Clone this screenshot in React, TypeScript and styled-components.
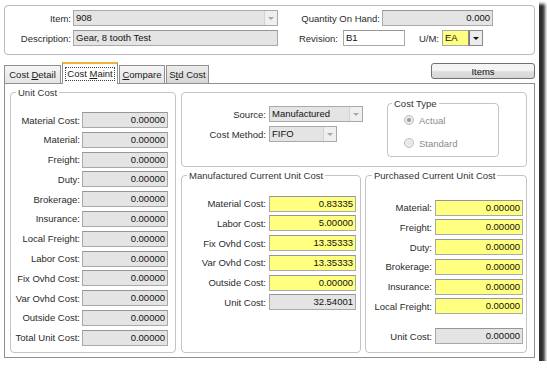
import styled, { createGlobalStyle } from 'styled-components';

const GlobalStyle = createGlobalStyle`
  html, body {
    margin: 0;
    padding: 0;
    background: #fff;
  }
  body {
    font-family: 'Liberation Sans', Arial, sans-serif;
    font-size: 9.5px;
    color: #262626;
  }
`;

const Window = styled.div`
  width: 539px;
  height: 361px;
  box-sizing: border-box;
  background: #fff;
  padding: 5px 4px 3px 4px;
  display: flex;
  flex-direction: column;
  box-shadow: 5px 5px 3px 1px rgba(0, 0, 0, 0.82);
`;

const HeaderBox = styled.div`
  height: 50px;
  box-sizing: border-box;
  border: 1px solid #b9b9b9;
  border-radius: 4px;
  padding: 4px 0 0 0;
  display: flex;
  flex-direction: column;
  gap: 4px;
`;

const Row = styled.div`
  display: flex;
  align-items: center;
`;

const Label = styled.span<{ $w: number; $gap?: number }>`
  width: ${(p) => p.$w}px;
  margin-right: ${(p) => p.$gap ?? 2}px;
  flex-shrink: 0;
  text-align: right;
  white-space: nowrap;
  color: #2b2b2b;
`;

type Tone = 'gray' | 'yellow' | 'white';

const toneBg: Record<Tone, string> = {
  gray: '#e4e4e4',
  yellow: '#ffff80',
  white: '#ffffff',
};

const Field = styled.div<{ $w: number; $tone: Tone; $right?: boolean }>`
  width: ${(p) => p.$w}px;
  height: 16px;
  box-sizing: border-box;
  flex-shrink: 0;
  border: 1px solid #a9a9a9;
  border-top-color: #969696;
  background: ${(p) => toneBg[p.$tone]};
  color: #111;
  line-height: 14px;
  padding: 0 2px;
  text-align: ${(p) => (p.$right ? 'right' : 'left')};
  white-space: nowrap;
  overflow: hidden;
`;

const Combo = styled.div<{ $w: number; $tone: Tone }>`
  width: ${(p) => p.$w}px;
  height: 16px;
  box-sizing: border-box;
  flex-shrink: 0;
  display: flex;
  border: 1px solid #a9a9a9;
  background: ${(p) => toneBg[p.$tone]};
  color: #111;
  line-height: 14px;
`;

const ComboText = styled.span`
  flex: 1;
  padding-left: 2px;
  white-space: nowrap;
  overflow: hidden;
`;

const ComboButton = styled.span<{ $active?: boolean }>`
  width: 12px;
  display: flex;
  align-items: center;
  justify-content: center;
  background: ${(p) => (p.$active ? '#ececec' : '#efefef')};
  border-left: 1px solid ${(p) => (p.$active ? '#7a7a7a' : '#d2d2d2')};
  ${(p) => (p.$active ? 'outline: 1px solid #8a8a8a;' : '')}

  &::after {
    content: '';
    border-left: 3px solid transparent;
    border-right: 3px solid transparent;
    border-top: 3px solid ${(p) => (p.$active ? '#111' : '#a8a8a8')};
  }
`;

const TabsRow = styled.div`
  margin-top: 8px;
  height: 21px;
  display: flex;
  align-items: flex-end;
  margin-bottom: -1px;
`;

const TabStrip = styled.div`
  display: flex;
  align-items: flex-end;
  gap: 1px;
  height: 22px;
`;

const Tab = styled.div<{ $w: number; $active?: boolean; $hot?: boolean }>`
  width: ${(p) => p.$w}px;
  height: ${(p) => (p.$active ? 22 : 19)}px;
  box-sizing: border-box;
  border: 1px solid #8e8f8f;
  border-bottom: ${(p) => (p.$active ? 'none' : '1px solid #8e8f8f')};
  ${(p) => (p.$active ? 'border-top: 2px solid #f2b33d;' : '')}
  background: ${(p) =>
    p.$active
      ? '#fff'
      : p.$hot
        ? 'linear-gradient(#ececec, #d6d6d6)'
        : 'linear-gradient(#f6f6f6, #e4e4e4)'};
  display: flex;
  align-items: center;
  justify-content: center;
  color: #1a1a1a;
  white-space: nowrap;
  position: relative;
  z-index: ${(p) => (p.$active ? 1 : 0)};
  u {
    text-decoration: underline;
  }
`;

const FocusText = styled.span`
  border: 1px dotted #444;
  padding: 0 1px;
  line-height: 12px;
`;

const ItemsButton = styled.div`
  margin-left: auto;
  align-self: flex-start;
  width: 104px;
  height: 16px;
  box-sizing: border-box;
  border: 1px solid #707070;
  border-radius: 3px;
  background: linear-gradient(#f4f4f4 45%, #dedede 55%, #d6d6d6);
  display: flex;
  align-items: center;
  justify-content: center;
  color: #111;
`;

const TabPanel = styled.div`
  flex: 1;
  border: 1px solid #8e8f8f;
  background: #fff;
  padding: 3px 7px 4px 5px;
  display: flex;
  gap: 5px;
`;

const Group = styled.fieldset<{ $w?: number; $pt: number }>`
  margin: 0;
  min-width: 0;
  ${(p) => (p.$w ? `width: ${p.$w}px; flex-shrink: 0;` : 'flex: 1;')}
  box-sizing: border-box;
  border: 1px solid #c4c4c4;
  border-radius: 4px;
  padding: ${(p) => p.$pt}px 0 0 0;
  display: flex;
  flex-direction: column;
  gap: 3.8px;
`;

const Legend = styled.legend<{ $ml?: number }>`
  padding: 0 2px;
  margin-left: ${(p) => p.$ml ?? 5}px;
  line-height: 11px;
  color: #333;
`;

const RightColumn = styled.div`
  flex: 1;
  display: flex;
  flex-direction: column;
`;

const SettingsBox = styled.div`
  margin-top: 5px;
  height: 75px;
  box-sizing: border-box;
  border: 1px solid #c4c4c4;
  border-radius: 4px;
  display: flex;
`;

const SettingsForm = styled.div`
  width: 205px;
  padding-top: 13px;
  display: flex;
  flex-direction: column;
  gap: 4px;
`;

const CostTypeGroup = styled.fieldset`
  margin: 5px 0 0 0;
  width: 112px;
  height: 59px;
  box-sizing: border-box;
  border: 1px solid #c4c4c4;
  border-radius: 4px;
  padding: 5px 0 0 16px;
  display: flex;
  flex-direction: column;
  gap: 11px;
`;

const RadioRow = styled.div`
  display: flex;
  align-items: center;
  gap: 5px;
  height: 12px;
  color: #8b8b8b;
`;

const RadioDot = styled.span<{ $checked?: boolean }>`
  width: 10px;
  height: 10px;
  box-sizing: border-box;
  border-radius: 50%;
  border: 1px solid #b9b9b9;
  background: radial-gradient(circle, #e2e2e2, #f4f4f4);
  display: flex;
  align-items: center;
  justify-content: center;

  &::after {
    content: '';
    width: 4px;
    height: 4px;
    border-radius: 50%;
    background: ${(p) => (p.$checked ? '#9a9a9a' : 'transparent')};
  }
`;

const CostRow = styled(Row)<{ $extra?: number }>`
  margin-top: ${(p) => p.$extra ?? 0}px;
`;

const LowerRow = styled.div`
  flex: 1;
  margin-top: 3px;
  display: flex;
  gap: 4px;
`;

const unitCostRows = [
  'Material Cost',
  'Material',
  'Freight',
  'Duty',
  'Brokerage',
  'Insurance',
  'Local Freight',
  'Labor Cost',
  'Fix Ovhd Cost',
  'Var Ovhd Cost',
  'Outside Cost',
  'Total Unit Cost',
];

const manufacturedRows = [
  { label: 'Material Cost', value: '0.83335', tone: 'yellow' as Tone },
  { label: 'Labor Cost', value: '5.00000', tone: 'yellow' as Tone },
  { label: 'Fix Ovhd Cost', value: '13.35333', tone: 'yellow' as Tone },
  { label: 'Var Ovhd Cost', value: '13.35333', tone: 'yellow' as Tone },
  { label: 'Outside Cost', value: '0.00000', tone: 'yellow' as Tone },
  { label: 'Unit Cost', value: '32.54001', tone: 'gray' as Tone },
];

const purchasedRows = ['Material', 'Freight', 'Duty', 'Brokerage', 'Insurance', 'Local Freight'];

function App() {
  return (
    <>
      <GlobalStyle />
      <Window>
        <HeaderBox>
          <Row>
            <Label $w={66}>Item:</Label>
            <Combo $w={205} $tone='gray'>
              <ComboText>908</ComboText>
              <ComboButton />
            </Combo>
            <Label $w={102}>Quantity On Hand:</Label>
            <Field $w={111} $tone='gray' $right>
              0.000
            </Field>
          </Row>
          <Row>
            <Label $w={66}>Description:</Label>
            <Field $w={205} $tone='gray'>
              Gear, 8 tooth Test
            </Field>
            <Label $w={60} $gap={5}>
              Revision:
            </Label>
            <Field $w={62} $tone='white'>
              B1
            </Field>
            <Label $w={34} $gap={3}>
              U/M:
            </Label>
            <Combo $w={41} $tone='yellow'>
              <ComboText>EA</ComboText>
              <ComboButton $active />
            </Combo>
          </Row>
        </HeaderBox>

        <TabsRow>
          <TabStrip>
            <Tab $w={57}>
              <span>
                Cost <u>D</u>etail
              </span>
            </Tab>
            <Tab $w={56} $active>
              <FocusText>
                Cost <u>M</u>aint
              </FocusText>
            </Tab>
            <Tab $w={46}>
              <span>
                <u>C</u>ompare
              </span>
            </Tab>
            <Tab $w={43} $hot>
              <span>
                S<u>t</u>d Cost
              </span>
            </Tab>
          </TabStrip>
          <ItemsButton>Items</ItemsButton>
        </TabsRow>

        <TabPanel>
          <Group $w={166} $pt={14}>
            <Legend>Unit Cost</Legend>
            {unitCostRows.map((label) => (
              <Row key={label}>
                <Label $w={69}>{label}:</Label>
                <Field $w={86} $tone='gray' $right>
                  0.00000
                </Field>
              </Row>
            ))}
          </Group>

          <RightColumn>
            <SettingsBox>
              <SettingsForm>
                <Row>
                  <Label $w={84} $gap={3}>
                    Source:
                  </Label>
                  <Combo $w={94} $tone='gray'>
                    <ComboText>Manufactured</ComboText>
                    <ComboButton />
                  </Combo>
                </Row>
                <Row>
                  <Label $w={84} $gap={3}>
                    Cost Method:
                  </Label>
                  <Combo $w={68} $tone='gray'>
                    <ComboText>FIFO</ComboText>
                    <ComboButton />
                  </Combo>
                </Row>
              </SettingsForm>
              <CostTypeGroup>
                <Legend $ml={-12}>Cost Type</Legend>
                <RadioRow>
                  <RadioDot $checked />
                  Actual
                </RadioRow>
                <RadioRow>
                  <RadioDot />
                  Standard
                </RadioRow>
              </CostTypeGroup>
            </SettingsBox>

            <LowerRow>
              <Group $w={180} $pt={14.5}>
                <Legend>Manufactured Current Unit Cost</Legend>
                {manufacturedRows.map((r) => (
                  <Row key={r.label}>
                    <Label $w={84} $gap={3}>
                      {r.label}:
                    </Label>
                    <Field $w={87} $tone={r.tone} $right>
                      {r.value}
                    </Field>
                  </Row>
                ))}
              </Group>
              <Group $pt={18.5}>
                <Legend $ml={6}>Purchased Current Unit Cost</Legend>
                {purchasedRows.map((label) => (
                  <Row key={label}>
                    <Label $w={66} $gap={3}>
                      {label}:
                    </Label>
                    <Field $w={88} $tone='yellow' $right>
                      0.00000
                    </Field>
                  </Row>
                ))}
                <CostRow $extra={10.2}>
                  <Label $w={66} $gap={3}>
                    Unit Cost:
                  </Label>
                  <Field $w={88} $tone='gray' $right>
                    0.00000
                  </Field>
                </CostRow>
              </Group>
            </LowerRow>
          </RightColumn>
        </TabPanel>
      </Window>
    </>
  );
}

export default App;
